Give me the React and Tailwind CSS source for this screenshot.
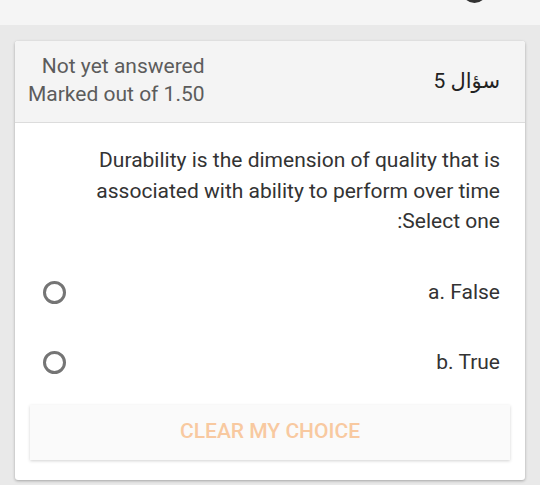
import React from 'react';

const font = {fontFamily: 'Roboto, "DejaVu Sans", sans-serif'};

function Radio() {
  return <span className="block w-[23px] h-[23px] rounded-full border-[3px] border-[#757575] bg-white" />;
}

function Option({label}) {
  return (
    <label className="flex items-center justify-between h-[70px] pl-[10px] pr-[10px]">
      <span className="text-[21px] text-[#333]">{label}</span>
      <Radio />
    </label>
  );
}

export default function App() {
  return (
    <div className="w-[540px] h-[485px] overflow-hidden bg-[#e9e9e9]" style={font}>
      <div className="relative h-[25px] bg-[#f5f5f5] overflow-hidden">
        <span className="absolute left-[462px] -top-[22px] w-[25px] h-[25px] rounded-full border-[3px] border-[#333]" />
      </div>
      <div className="px-[15px] pt-[16px]">
        <div dir="rtl" className="bg-white rounded-[3px] shadow-[0_1px_3px_rgba(0,0,0,0.3)] overflow-hidden">
          <div className="flex items-center justify-between h-[82px] pr-[25px] pl-[13px] bg-[#f4f4f4] border-b border-[#dcdcdc]">
            <div className="text-[21px] text-[#222]">سؤال 5</div>
            <div className="mb-[4px] text-[21px] leading-[28px] text-[#5c5c5c]">
              <div>Not yet answered</div>
              <div>Marked out of 1.50</div>
            </div>
          </div>
          <div className="px-[15px] pt-[22px] pb-[20px]">
            <div className="pr-[10px] pl-[13px] text-[21px] leading-[30.5px] text-[#333]">
              <p>Durability is the dimension of quality that is associated with ability to perform over time</p>
              <p>Select one:</p>
            </div>
            <div className="mt-[21px] pl-[3px]">
              <Option label="a. False" />
              <Option label="b. True" />
            </div>
            <button className="mt-[7px] w-full h-[55px] bg-[#fafafa] shadow-[0_1px_3px_rgba(0,0,0,0.18)] text-[21px] font-medium uppercase text-[#f8c9a0]">
              Clear my choice
            </button>
          </div>
        </div>
      </div>
    </div>
  );
}
